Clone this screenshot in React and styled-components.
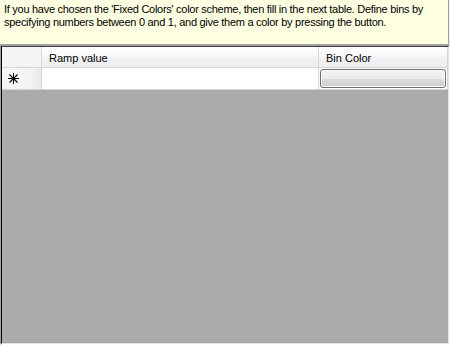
import React from "react";
import styled, { createGlobalStyle } from "styled-components";

const Global = createGlobalStyle`
  html, body { margin: 0; padding: 0; background: #f0f0f0; }
  body { font-family: "Liberation Sans", Arial, sans-serif; font-size: 11px; color: #000; }
`;

const Frame = styled.div`
  width: 450px;
  height: 345px;
  display: flex;
  flex-direction: column;
  overflow: hidden;
`;

const Hint = styled.div`
  height: 45px;
  box-sizing: border-box;
  background: #ffffe1;
  border-right: 1px solid #a0a0a0;
  border-bottom: 1px solid #a0a0a0;
  margin-right: 1px;
  padding: 3px 4px 0 4px;
  line-height: 13px;
  font-size: 11px;
  letter-spacing: -0.28px;
`;

const Grid = styled.div`
  flex: 1;
  box-sizing: border-box;
  border-top: 1px solid #a0a0a0;
  border-left: 1px solid #a0a0a0;
  border-right: 1px solid #ffffff;
  border-bottom: 1px solid #ffffff;
  display: flex;
`;

const GridInner = styled.div`
  flex: 1;
  box-sizing: border-box;
  border: 1px solid #000;
  border-right-color: #e3e3e3;
  border-bottom-color: #e3e3e3;
  border-top-color: #404040;
  border-left-color: #000;
  background: #ababab;
  display: flex;
  flex-direction: column;
`;

const Row = styled.div`
  display: grid;
  grid-template-columns: 40px 277px 1fr;
  height: ${(p) => p.$h}px;
  background: #ababab;
`;

const HeadCell = styled.div`
  box-sizing: border-box;
  background: linear-gradient(#ffffff 0%, #f7f8fa 45%, #f1f2f4 55%, #eceef1 100%);
  border-right: 1px solid #d5d5d5;
  border-bottom: 1px solid #d5d5d5;
  padding: 5px 0 0 7px;
  line-height: 13px;
  white-space: nowrap;
`;

const Corner = styled(HeadCell)`
  background: #f4f4f6;
  padding: 0;
`;

const RowHead = styled.div`
  box-sizing: border-box;
  background: linear-gradient(90deg, #f5f5f7 0%, #f3f3f5 70%, #e9e9ec 100%);
  border-right: 1px solid #d5d5d5;
  border-bottom: 1px solid #d5d5d5;
  display: flex;
  align-items: center;
  padding-left: 6px;
`;

const Cell = styled.div`
  box-sizing: border-box;
  background: #fff;
  border-right: 1px solid #d5d5d5;
  border-bottom: 1px solid #d5d5d5;
  padding: 1px;
  display: flex;
`;

const BinButton = styled.div`
  flex: 1;
  box-sizing: border-box;
  border: 1px solid #707070;
  border-radius: 3px;
  box-shadow: inset 0 0 0 1px #fcfcfc;
  background: linear-gradient(#f2f2f2 0%, #ebebeb 50%, #dddddd 51%, #cfcfcf 100%);
`;

const Star = () => (
  <svg width="11" height="11" viewBox="0 0 11 11">
    <g stroke="#000" strokeWidth="1" shapeRendering="crispEdges">
      <line x1="5.5" y1="0" x2="5.5" y2="11" />
      <line x1="0" y1="5.5" x2="11" y2="5.5" />
    </g>
    <g stroke="#000" strokeWidth="1.1">
      <line x1="1.5" y1="1.5" x2="9.5" y2="9.5" />
      <line x1="9.5" y1="1.5" x2="1.5" y2="9.5" />
    </g>
  </svg>
);

export default function App() {
  return (
    <Frame>
      <Global />
      <Hint>
        If you have chosen the 'Fixed Colors' color scheme, then fill in the next table. Define bins by
        specifying numbers between 0 and 1, and give them a color by pressing the button.
      </Hint>
      <Grid>
        <GridInner>
          <Row $h={21}>
            <Corner />
            <HeadCell>Ramp value</HeadCell>
            <HeadCell>Bin Color</HeadCell>
          </Row>
          <Row $h={22}>
            <RowHead>
              <Star />
            </RowHead>
            <Cell />
            <Cell>
              <BinButton />
            </Cell>
          </Row>
        </GridInner>
      </Grid>
    </Frame>
  );
}
